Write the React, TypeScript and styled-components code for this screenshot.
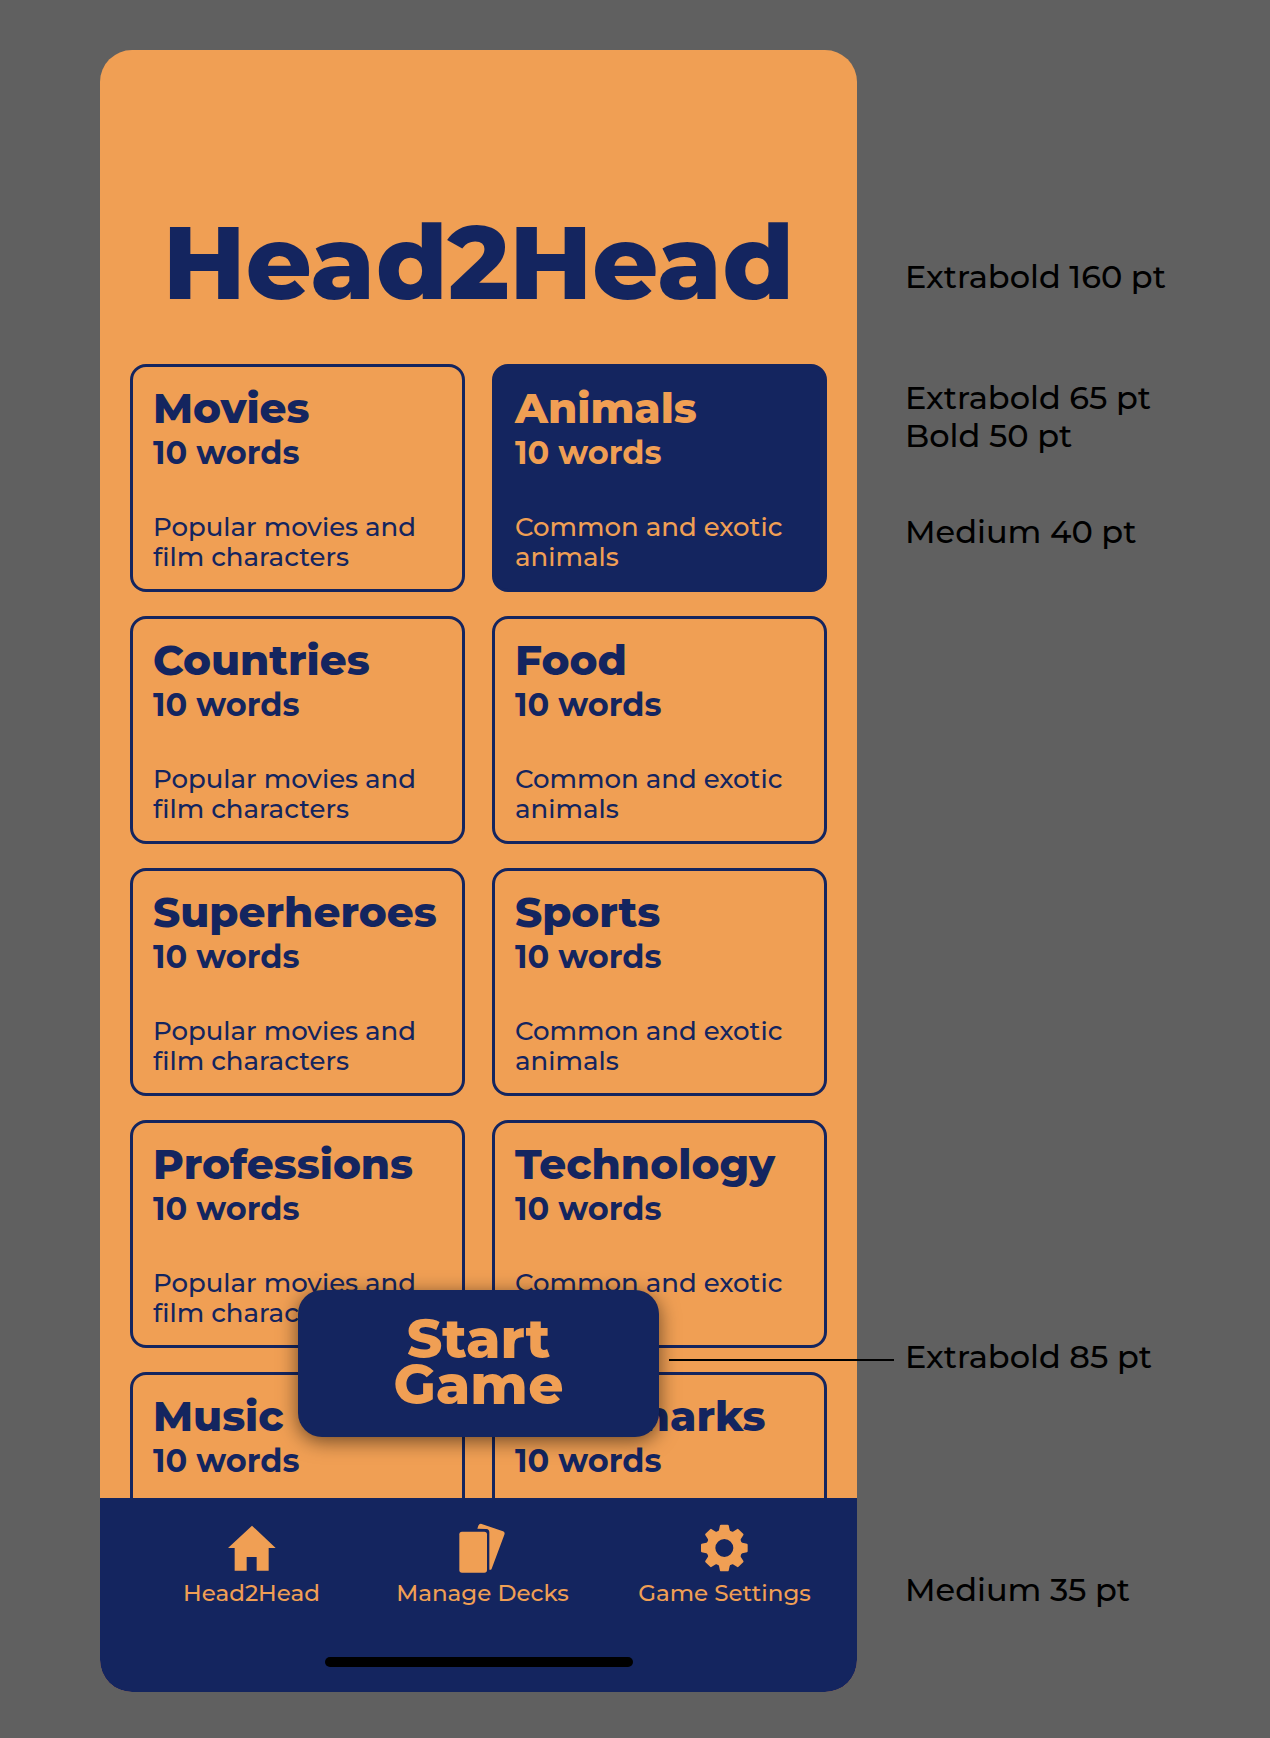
import React, { useState } from "react";
import styled, { createGlobalStyle } from "styled-components";

const navy = "#14255f";
const orange = "#f09f54";

const GlobalStyle = createGlobalStyle`
  *, *::before, *::after { box-sizing: border-box; }
  body { margin: 0; background: #606060; }
  body, button { font-family: Montserrat, Inter, sans-serif; }
`;

const Page = styled.main`
  display: grid;
  grid-template-columns: minmax(0, 757px) minmax(0, 1fr);
  height: 100vh;
  min-height: 1100px;
  padding: 50px 0 46px 100px;
`;

const Phone = styled.section`
  display: flex;
  flex-direction: column;
  min-height: 0;
  overflow: hidden;
  border-radius: 32px;
  background: ${orange};
  color: ${navy};
`;

const Title = styled.h1`
  margin: 0;
  padding: 160px 0 50px;
  font-size: 103px;
  line-height: 104px;
  font-weight: 800;
  text-align: center;
`;

const DeckArea = styled.div`
  position: relative;
  flex: 1 1 0;
  min-height: 0;
  overflow: hidden;
`;

const DeckGrid = styled.div`
  display: grid;
  grid-template-columns: 1fr 1fr;
  gap: 24px 27px;
  padding: 0 30px;
`;

const Card = styled.button`
  display: flex;
  flex-direction: column;
  height: 228px;
  padding: 19px 20px 0;
  border: 3px solid ${navy};
  border-radius: 16px;
  background: ${(p) => (p["aria-pressed"] ? navy : "transparent")};
  color: ${(p) => (p["aria-pressed"] ? orange : navy)};
  text-align: left;
`;

const CardName = styled.span`
  font-size: 42px;
  line-height: 44px;
  font-weight: 800;
`;

const CardCount = styled.span`
  font-size: 32px;
  line-height: 46px;
  font-weight: 700;
`;

const CardText = styled.span`
  margin-top: 36px;
  font-size: 26px;
  line-height: 30px;
  font-weight: 500;
  font-variant-ligatures: none;
`;

const StartBar = styled.div`
  position: absolute;
  inset: auto 0 61px;
  display: flex;
  justify-content: center;
`;

const StartButton = styled.button`
  width: 361px;
  height: 147px;
  padding: 0 90px 4px;
  border: 0;
  border-radius: 24px;
  background: ${navy};
  color: ${orange};
  box-shadow: 0 4px 20px rgba(0, 0, 0, 0.55);
  font-size: 55px;
  line-height: 46px;
  font-weight: 800;
`;

const TabBar = styled.footer`
  height: 194px;
  padding: 25px 6px 0 36px;
  background: ${navy};
`;

const Tabs = styled.nav`
  display: grid;
  grid-template-columns: 231fr 231fr 253fr;
`;

const Tab = styled.a`
  display: flex;
  flex-direction: column;
  align-items: center;
  gap: 6px;
  color: ${orange};
  font-size: 23px;
  line-height: 28px;
  font-weight: 500;
  text-decoration: none;
  white-space: nowrap;
`;

const Icon = styled.svg`
  width: 50px;
  height: 50px;
  fill: currentColor;
`;

const HomeIndicator = styled.div`
  width: 308px;
  height: 10px;
  margin: 50px auto 0 189px;
  border-radius: 5px;
  background: #000;
`;

const Notes = styled.aside`
  display: flex;
  flex-direction: column;
  justify-content: space-between;
  padding: 208px 0 83px 48px;
  color: #000;
  font-size: 32px;
  line-height: 38px;
  font-weight: 500;
  white-space: nowrap;
`;

const Note = styled.p<{ $gap?: number }>`
  margin: ${(p) => p.$gap ?? 0}px 0 0;
`;

const PointerNote = styled(Note)`
  position: relative;

  &::before {
    content: "";
    position: absolute;
    top: 21px;
    right: calc(100% + 11px);
    width: 225px;
    height: 2px;
    background: #000;
  }
`;

const names = [
  "Movies", "Animals", "Countries", "Food", "Superheroes",
  "Sports", "Professions", "Technology", "Music", "Landmarks",
];
const texts = ["Popular movies and film characters", "Common and exotic animals"];

const teeth = [0, 45, 90, 135, 180, 225, 270, 315];

export default function App() {
  const [selected, setSelected] = useState("Animals");

  return (
    <>
      <GlobalStyle />
      <Page>
        <Phone>
          <Title>Head2Head</Title>
          <DeckArea>
            <DeckGrid>
              {names.map((name, i) => (
                <Card key={name} aria-pressed={name === selected} onClick={() => setSelected(name)}>
                  <CardName>{name}</CardName>
                  <CardCount>10 words</CardCount>
                  <CardText>{texts[i % 2]}</CardText>
                </Card>
              ))}
            </DeckGrid>
            <StartBar>
              <StartButton>Start Game</StartButton>
            </StartBar>
          </DeckArea>
          <TabBar>
            <Tabs>
              <Tab href="#home">
                <Icon viewBox="0 0 150 150" aria-hidden="true">
                  <path d="M75 8 146 75H125V143H89V102H59V143H23V75H3Z" />
                </Icon>
                Head2Head
              </Tab>
              <Tab href="#decks">
                <Icon viewBox="0 0 150 150" aria-hidden="true">
                  <rect x="4" y="26" width="83" height="123" rx="8" />
                  <path d="M58 17 61 8Q64 1 71 3L135 25Q142 28 139 35L101 137Q99 142 94 140V28Q94 19 85 18Z" />
                </Icon>
                Manage Decks
              </Tab>
              <Tab href="#settings">
                <Icon viewBox="0 0 150 150" aria-hidden="true">
                  <g transform="translate(73 75)">
                    <path fillRule="evenodd" d="M0-54A54 54 0 1 1 0 54A54 54 0 1 1 0-54ZM0-27A27 27 0 1 0 0 27A27 27 0 1 0 0-27Z" />
                    {teeth.map((angle) => (
                      <path key={angle} transform={`rotate(${angle})`} d="M-20-46 -16-54 -13-68Q-12-70-10-70H10Q12-70 13-68L16-54 20-46Z" />
                    ))}
                  </g>
                </Icon>
                Game Settings
              </Tab>
            </Tabs>
            <HomeIndicator />
          </TabBar>
        </Phone>
        <Notes>
          <div>
            <Note>Extrabold 160 pt</Note>
            <Note $gap={83}>Extrabold 65 pt</Note>
            <Note>Bold 50 pt</Note>
            <Note $gap={58}>Medium 40 pt</Note>
          </div>
          <div>
            <PointerNote>Extrabold 85 pt</PointerNote>
            <Note $gap={195}>Medium 35 pt</Note>
          </div>
        </Notes>
      </Page>
    </>
  );
}
